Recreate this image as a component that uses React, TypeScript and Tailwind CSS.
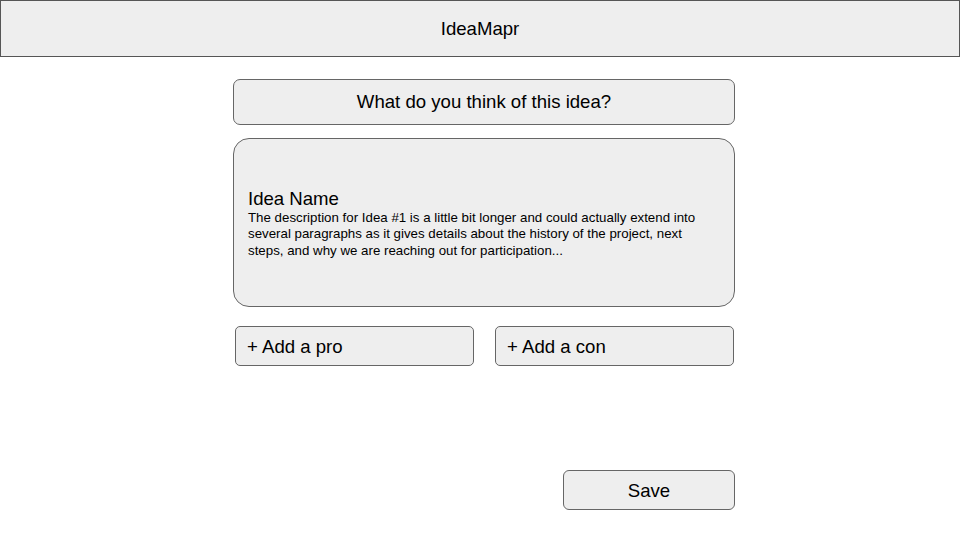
export default function App() {
  return (
    <div className="w-[960px] h-[540px] bg-white font-['Liberation_Sans',Arial,sans-serif] text-black">
      <header className="h-[57px] pt-[2px] bg-[#eeeeee] border border-[#555555] flex items-center justify-center">
        <h1 className="text-[18.6px] leading-none">IdeaMapr</h1>
      </header>

      <main className="pl-[233px] pt-[22px]">
        <div className="w-[502px] flex flex-col">
          <div className="h-[46px] bg-[#eeeeee] border border-[#666666] rounded-[7px] flex items-center justify-center text-[18.6px]">
            What do you think of this idea?
          </div>

          <div className="mt-[13px] h-[169px] bg-[#eeeeee] border border-[#666666] rounded-[16px] flex flex-col justify-center pl-[14px] pr-[16px]">
            <h2 className="text-[18.6px] leading-[22px] pt-[2px]">Idea Name</h2>
            <p className="text-[13.3px] leading-[16.5px]">
              The description for Idea #1 is a little bit longer and could actually extend into several paragraphs as it gives details about the history of the project, next steps, and why we are reaching out for participation...
            </p>
          </div>

          <div className="mt-[19px] flex justify-between pl-[2px] pr-[1px]">
            <button className="w-[239px] h-[40px] pt-[2px] bg-[#eeeeee] border border-[#666666] rounded-[5px] text-left pl-[11px] text-[18.6px]">
              + Add a pro
            </button>
            <button className="w-[239px] h-[40px] pt-[2px] bg-[#eeeeee] border border-[#666666] rounded-[5px] text-left pl-[11px] text-[18.6px]">
              + Add a con
            </button>
          </div>

          <div className="mt-[104px] flex justify-end">
            <button className="w-[172px] h-[40px] pt-[2px] bg-[#eeeeee] border border-[#666666] rounded-[6px] text-[18.6px]">
              Save
            </button>
          </div>
        </div>
      </main>
    </div>
  );
}
